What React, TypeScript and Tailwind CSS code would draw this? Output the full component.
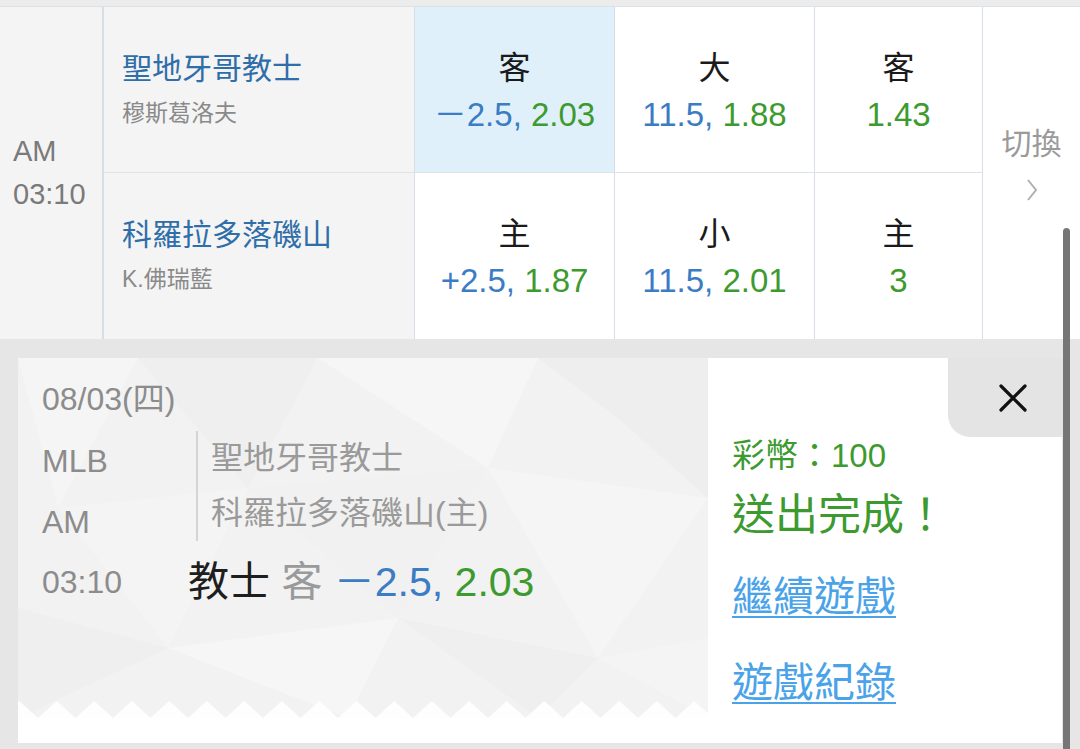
import React from "react";

const font = "font-['Liberation_Sans','Noto_Sans_CJK_TC',sans-serif]";

type Odd = { label: string; line?: string; price: string; active?: boolean };

const rows: { team: string; pitcher: string; odds: Odd[] }[] = [
  {
    team: "聖地牙哥教士",
    pitcher: "穆斯葛洛夫",
    odds: [
      { label: "客", line: "－2.5,", price: "2.03", active: true },
      { label: "大", line: "11.5,", price: "1.88" },
      { label: "客", price: "1.43" },
    ],
  },
  {
    team: "科羅拉多落磯山",
    pitcher: "K.佛瑞藍",
    odds: [
      { label: "主", line: "+2.5,", price: "1.87" },
      { label: "小", line: "11.5,", price: "2.01" },
      { label: "主", price: "3" },
    ],
  },
];

const widths = ["w-[200px]", "w-[200px]", "w-[168px]"];

const OddCell = ({ odd, w }: { odd: Odd; w: string }) => (
  <div
    className={`${w} h-full flex flex-col items-center border-r border-[#d6dee6] ${
      odd.active ? "bg-[#dff0fa]" : "bg-white"
    }`}
  >
    <div className="pt-[41px] text-[32px] leading-[40px] text-[#1a1a1a]">{odd.label}</div>
    <div className="mt-[7px] text-[33px] leading-[40px] whitespace-nowrap">
      {odd.line && <span className="text-[#3b7cc4]">{odd.line} </span>}
      <span className="text-[#3d9a2e]">{odd.price}</span>
    </div>
  </div>
);

const Pattern = () => (
  <svg className="absolute inset-0 w-full h-full" viewBox="0 0 690 360" preserveAspectRatio="none">
    <rect width="690" height="360" fill="#f2f2f2" />
    <polygon points="0,0 120,0 40,150" fill="#f5f5f5" />
    <polygon points="120,0 300,0 230,130" fill="#efefef" />
    <polygon points="300,0 520,0 470,110" fill="#f6f6f6" />
    <polygon points="520,0 690,0 690,140 600,60" fill="#eeeeee" />
    <polygon points="40,150 230,130 150,290" fill="#f4f4f4" />
    <polygon points="230,130 470,110 380,260" fill="#f1f1f1" />
    <polygon points="470,110 690,140 580,300" fill="#f5f5f5" />
    <polygon points="0,250 150,290 0,360" fill="#efefef" />
    <polygon points="150,290 380,260 330,360" fill="#f6f6f6" />
    <polygon points="380,260 580,300 520,360" fill="#efefef" />
    <polygon points="580,300 690,280 690,360" fill="#f4f4f4" />
  </svg>
);

const Zigzag = () => (
  <svg className="absolute left-0 bottom-0 w-full h-[17px]" viewBox="0 0 690 17" preserveAspectRatio="none">
    <defs>
      <pattern id="zz" width="37.5" height="17" patternUnits="userSpaceOnUse" x="20">
        <polygon points="0,17 18.75,0 37.5,17" fill="#fefefe" />
      </pattern>
    </defs>
    <rect width="690" height="17" fill="url(#zz)" />
  </svg>
);

export default function App() {
  return (
    <div className={`${font} relative w-[1080px] h-[749px] overflow-hidden bg-white`}>
      <div className="h-[7px] bg-[#ececec] border-b border-[#d9e1e9]" />

      <div className="flex h-[332px]">
        <div className="w-[104px] bg-[#f4f4f4] border-r-2 border-[#d6dee6] flex flex-col justify-center pl-[13px] text-[29px] leading-[43px] text-[#7a7a7a]">
          <div>AM</div>
          <div>03:10</div>
        </div>

        <div className="flex flex-col">
          {rows.map((r, i) => (
            <div key={i} className={`flex h-[166px] ${i === 0 ? "border-b border-[#dde3e9]" : ""}`}>
              <div className="w-[311px] bg-[#f4f4f4] border-r border-[#d6dee6] pl-[18px]">
                <div className="pt-[44px] text-[30px] leading-[36px] text-[#2f6ea8]">{r.team}</div>
                <div className="mt-[11px] text-[23px] leading-[30px] text-[#8a8a8a]">{r.pitcher}</div>
              </div>
              {r.odds.map((o, j) => (
                <OddCell key={j} odd={o} w={widths[j]} />
              ))}
            </div>
          ))}
        </div>

        <div className="flex-1 flex flex-col items-center pt-[114px] bg-white">
          <div className="text-[30px] leading-[46px] text-[#9a9a9a]">切換</div>
          <svg width="14" height="26" viewBox="0 0 14 26" className="mt-[10px]">
            <path d="M3 3 L11 13 L3 23" fill="none" stroke="#b0b0b0" strokeWidth="2" />
          </svg>
        </div>
      </div>

      <div className="bg-[#e6e6e6] h-[410px] pt-[19px] pl-[18px] pr-[18px] pb-[7px]">
        <div className="relative flex h-[385px] bg-white">
          <div className="relative w-[690px] h-[360px]">
            <Pattern />
            <Zigzag />
            <div className="relative pl-[24px] pt-[22px] text-[32px] text-[#8c8c8c]">
              <div className="leading-[38px]">08/03(四)</div>
              <div className="flex mt-[13px]">
                <div className="w-[154px] leading-[61px]">
                  <div>MLB</div>
                  <div>AM</div>
                </div>
                <div className="border-l-2 border-[#d4d4d4] pl-[13px] h-[110px] leading-[55px] text-[#9a9a9a]">
                  <div>聖地牙哥教士</div>
                  <div>科羅拉多落磯山(主)</div>
                </div>
              </div>
              <div className="flex items-center mt-[4px]">
                <div className="w-[146px] leading-[50px]">03:10</div>
                <div className="text-[41px] leading-[50px] whitespace-nowrap">
                  <span className="text-[#1e1e1e]">教士 </span>
                  <span className="text-[#9a9a9a]">客 </span>
                  <span className="text-[#3b7cc4]">－2.5, </span>
                  <span className="text-[#3d9a2e]">2.03</span>
                </div>
              </div>
            </div>
          </div>

          <div className="flex-1 pl-[24px] pt-[77px]">
            <div className="text-[33px] leading-[42px] text-[#3d9a2e]">彩幣：100</div>
            <div className="mt-[12px] text-[43px] leading-[52px] text-[#3d9a2e]">送出完成！</div>
            <div className="mt-[32px] flex flex-col gap-[38px] items-start">
              <a className="text-[41px] leading-[48px] text-[#4aa3e8] underline decoration-2 underline-offset-[5px]">繼續遊戲</a>
              <a className="text-[41px] leading-[48px] text-[#4aa3e8] underline decoration-2 underline-offset-[5px]">遊戲紀錄</a>
            </div>
          </div>

          <button className="absolute top-0 right-0 w-[114px] h-[79px] bg-[#e4e4e4] rounded-bl-[22px] flex items-center justify-center pl-[16px]">
            <svg width="30" height="30" viewBox="0 0 30 30">
              <path d="M3 3 L27 27 M27 3 L3 27" stroke="#111" strokeWidth="3.2" strokeLinecap="round" />
            </svg>
          </button>
        </div>
      </div>

      <div className="absolute right-[10px] top-[228px] bottom-0 w-[7px] bg-[#767676] rounded-t-full" />
    </div>
  );
}
